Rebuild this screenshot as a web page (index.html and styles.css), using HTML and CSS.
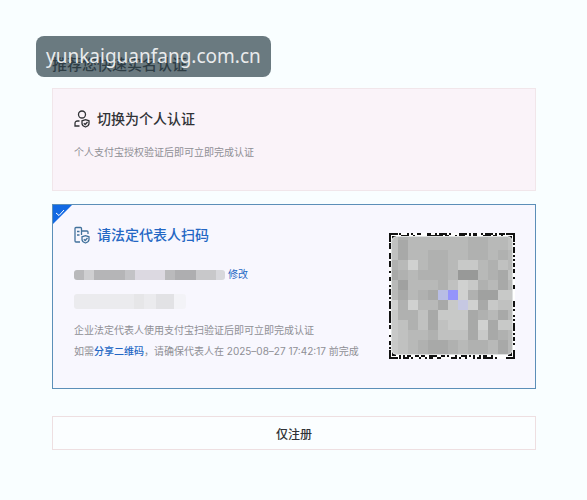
FILE: index.html
```html
<!DOCTYPE html>
<html lang="zh-CN">
<head>
    <meta charset="UTF-8">
    <meta name="viewport" content="width=device-width, initial-scale=1.0">
    <title>实名认证</title>
    <link rel="stylesheet" href="styles.css">
</head>
<body>
    <div class="site-badge">yunkaiguanfang.com.cn</div>
    <main>
        <h1>推荐您快速实名认证</h1>

        <section class="card">
            <h2>
                <svg class="icon" viewBox="0 0 16 18" fill="none" stroke="currentColor">
                    <circle cx="8" cy="4.5" r="3.5"/>
                    <path d="M5.5 11H3.5Q1 11 1 13.5V16H5.5"/>
                    <path d="M11.5 9.7L15 10.8V13.5Q15 15.8 11.5 17Q8 15.8 8 13.5V10.8Z"/>
                    <path d="M9.8 13.2L11.2 14.5L13.5 12"/>
                </svg>
                切换为个人认证
            </h2>
            <p>个人支付宝授权验证后即可立即完成认证</p>
        </section>

        <section class="card selected">
            <svg class="corner" viewBox="0 0 19 19">
                <path d="M0 0H19L0 19Z" fill="#1269e3"/>
                <path d="M3 8L6 10.5L11 5" fill="none" stroke="#fff"/>
            </svg>
            <div class="info">
                <h2>
                    <svg class="icon" viewBox="0 0 16 18" fill="none" stroke="currentColor">
                        <path d="M6 16H2Q1 16 1 15V2.5Q1 1.5 2 1.5H6.5Q7.5 1.5 7.5 2.5V9M7.5 5H13Q14 5 14 6V8M3 5.5H5.5M3 9H5.5"/>
                        <path d="M11.5 9.7L15 10.8V13.5Q15 15.8 11.5 17Q8 15.8 8 13.5V10.8Z"/>
                        <path d="M9.8 13.2L11.2 14.5L13.5 12"/>
                    </svg>
                    请法定代表人扫码
                </h2>
                <div class="account">
                    <span class="masked name"></span>
                    <a href="#edit">修改</a>
                </div>
                <div class="masked number"></div>
                <p>企业法定代表人使用支付宝扫验证后即可立即完成认证</p>
                <p>如需<a class="share" href="#share">分享二维码</a>，请确保代表人在 <span class="date">2025–08–27 17:42:17</span> 前完成</p>
            </div>
            <svg class="qr" viewBox="0 0 126 126">
                <clipPath id="cover"><rect x="3" y="4" width="120" height="117" rx="5"/></clipPath>
                <g id="modules" shape-rendering="crispEdges"></g>
                <rect x="2" y="3" width="122" height="119" rx="6" fill="#dfe1e1"/>
                <g id="mosaic" clip-path="url(#cover)"></g>
            </svg>
        </section>

        <button type="button">仅注册</button>
    </main>
    <script src="qr.js"></script>
</body>
</html>
```

FILE: styles.css
```css
* {
    box-sizing: border-box;
}
body {
    margin: 0;
    padding: 55px 51px 40px 52px;
    background-color: #f9feff;
    color: #303236;
    font-family: "Liberation Sans", "Noto Sans CJK SC", sans-serif;
}
.site-badge {
    position: absolute;
    top: 36px;
    left: 36px;
    padding: 8px 10px;
    border-radius: 8px;
    background: rgba(46, 66, 74, 0.7);
    color: #e9ebec;
    font: 19px/25px "Noto Sans", sans-serif;
}
h1 {
    margin: 0 0 13px;
    font-size: 15px;
    line-height: 20px;
    font-weight: 500;
}
.card {
    min-height: 103px;
    margin-bottom: 13px;
    padding: 20px 20px 20px 21px;
    border: 1px solid #f1e6ea;
    background: #faf3f9;
}
h2 {
    display: flex;
    align-items: center;
    gap: 7px;
    margin: 0 0 14px;
    font-size: 14px;
    line-height: 20px;
    font-weight: 500;
}
.icon {
    width: 16px;
    height: 18px;
    stroke-width: 1.3;
}
p {
    margin: 0;
    color: #8f8f95;
    font-size: 10px;
    line-height: 20px;
}
.selected {
    position: relative;
    display: flex;
    justify-content: space-between;
    min-height: 185px;
    margin-bottom: 27px;
    border-color: #5c8fb8;
    background: #f8f7fe;
}
.corner {
    position: absolute;
    top: 0;
    left: 0;
    width: 19px;
    height: 19px;
}
.selected h2 {
    margin-bottom: 20px;
    color: #2467c4;
}
.selected .icon {
    color: #42729c;
}
a {
    color: #2467c4;
    text-decoration: none;
}
.account {
    display: flex;
    align-items: center;
    gap: 3px;
    margin-bottom: 9px;
    font-size: 10px;
    line-height: 20px;
}
.masked {
    display: block;
    border-radius: 3px;
}
.name {
    width: 151px;
    height: 10px;
    background: linear-gradient(90deg, #b9b9bb 0 10px, #cfcfd1 10px 20px, #b5b5b7 20px 51px, #c3c3c6 51px 61px, #dcd9e1 61px 91px, #bababc 91px 101px, #aeaeb0 101px 122px, #c8c8ca 122px 142px, #d8d8dc 142px);
}
.number {
    width: 112px;
    height: 15px;
    margin-bottom: 12px;
    background: linear-gradient(90deg, #ebebee 0 60px, #e6e6e8 60px 70px, #ebebee 70px 82px, #e2e2e5 82px 100px, #f3f3f7 100px);
}
.share {
    font-weight: 500;
}
.date {
    font-family: Inter, sans-serif;
}
.qr {
    flex: none;
    width: 126px;
    height: 126px;
    margin-top: 8px;
}
button {
    width: 100%;
    height: 34px;
    border: 1px solid #eedfe1;
    background: #fbfeff;
    color: #303236;
    font: 500 12px "Noto Sans CJK SC", sans-serif;
}
```

FILE: qr.js
```js
const modules = document.getElementById('modules');
const mosaic = document.getElementById('mosaic');

function addRect(parent, x, y, width, height, fill) {
    const rect = document.createElementNS('http://www.w3.org/2000/svg', 'rect');
    const attrs = { x, y, width, height, fill };
    Object.keys(attrs).forEach(key => rect.setAttribute(key, attrs[key]));
    parent.appendChild(rect);
}

// code modules, only the rim stays visible
addRect(modules, 0, 0, 126, 126, '#fff');
let seed = 7;
for (let i = 5; i < 58; i++) {
    [[i * 2, 0], [i * 2, 2], [i * 2, 122], [i * 2, 124], [0, i * 2], [2, i * 2], [122, i * 2], [124, i * 2]].forEach(([x, y]) => {
        seed = (seed * 1103515245 + 12345) % 2147483648;
        if (seed / 2147483648 > 0.48) {
            addRect(modules, x, y, 2, 2, '#111');
        }
    });
}

// corner marks
[[0, 0], [1, 0], [0, 1], [1, 1]].forEach(([right, bottom]) => {
    addRect(modules, right ? 117 : 0, bottom ? 124 : 0, 9, 2, '#111');
    addRect(modules, right ? 124 : 0, bottom ? 117 : 0, 2, 9, '#111');
    addRect(modules, right ? 119 : 3, bottom ? 119 : 3, 4, 4, '#111');
});

// 0 is the darkest grey, 9 the lightest; letters are the blue cells
const rows = [
    '5344444433445',
    '5244444433445',
    '5244334433434',
    '3474334664354',
    '2343334004325',
    '4144435763424',
    '42432ab731166',
    '7374426c72655',
    '6335266623424',
    '6535256627266',
    '6544355526234',
    '6543223433424',
    '6543223433424'
];
const blues = { a: '#b8bde4', b: '#9494fb', c: '#c6c8e2' };

rows.forEach((row, r) => {
    [...row].forEach((cell, c) => {
        const grey = 152 + cell * 8;
        const fill = blues[cell] || `rgb(${grey}, ${grey + 1}, ${grey})`;
        addRect(mosaic, c * 10 - 1, r * 10 - 3, 10, 10, fill);
    });
});
```
